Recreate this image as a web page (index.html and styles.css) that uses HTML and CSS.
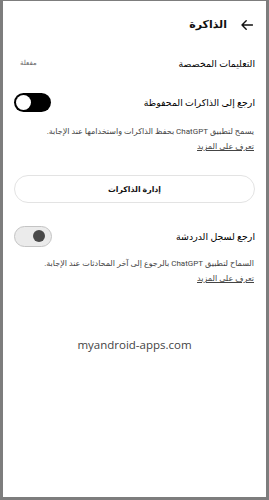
FILE: index.html
```html
<!DOCTYPE html>
<html lang="ar" dir="rtl">
<head>
<meta charset="utf-8">
<link rel="stylesheet" href="styles.css">
</head>
<body>
<div class="frame">
  <header class="topbar">
    <svg class="back" width="12" height="10" viewBox="0 0 12 10"><path d="M11.5 5H1M5.2 0.8L1 5l4.2 4.2" fill="none" stroke="#111" stroke-width="1.4" stroke-linecap="round" stroke-linejoin="round"/></svg>
    <h1 class="title">الذاكرة</h1>
  </header>

  <div class="row row-custom">
    <span class="label">التعليمات المخصصة</span>
    <span class="status">مفعلة</span>
  </div>

  <div class="row row-toggle">
    <span class="label">ارجع إلى الذاكرات المحفوظة</span>
    <span class="switch on"><span class="knob"></span></span>
  </div>
  <p class="desc">يسمح لتطبيق ChatGPT بحفظ الذاكرات واستخدامها عند الإجابة.<br><a class="more">تعرف على المزيد</a></p>

  <button class="manage">إدارة الذاكرات</button>

  <div class="row row-toggle2">
    <span class="label">ارجع لسجل الدردشة</span>
    <span class="switch off"><span class="knob"></span></span>
  </div>
  <p class="desc desc-chat">السماح لتطبيق ChatGPT بالرجوع إلى آخر المحادثات عند الإجابة.<br><a class="more">تعرف على المزيد</a></p>

  <div class="watermark">myandroid-apps.com</div>
</div>
</body>
</html>
```
FILE: styles.css
```css
* { box-sizing: border-box; }
html, body { margin: 0; padding: 0; }
body {
  width: 269px;
  height: 500px;
  background: #fff;
  font-family: Roboto, "DejaVu Sans", sans-serif;
  color: #111;
}
.frame {
  width: 269px;
  height: 500px;
  border-style: solid;
  border-color: #7d7d7d;
  border-width: 1px 3px 3px 3px;
  background: #fff;
  padding: 0 11px 0 11px;
  display: flex;
  flex-direction: column;
}
.topbar {
  display: flex;
  align-items: center;
  gap: 14px;
  height: 20px;
  margin-top: 14px;
  margin-right: 2px;
}
.title {
  margin: 0;
  font-size: 11px;
  font-weight: bold;
  line-height: 20px;
}
.row {
  display: flex;
  align-items: center;
  justify-content: space-between;
}
.label { font-size: 9.4px; color: #000; }
.row-custom { margin-top: 20px; height: 16px; }
.status { font-size: 7px; color: #666; margin-left: 6px; }
.row-toggle { margin-top: 21px; height: 20px; }
.row-toggle2 { margin-top: 22px; height: 22px; }
.switch {
  width: 37px;
  height: 19px;
  border-radius: 10px;
  display: flex;
  align-items: center;
}
.switch.on {
  background: #000;
  justify-content: flex-end;
  padding: 0 2px;
}
.switch.on .knob {
  width: 15px; height: 15px; border-radius: 50%; background: #fff;
}
.switch.off {
  width: 38px;
  height: 21px;
  background: #ebebeb;
  border: 1px solid #c4c4c4;
  border-radius: 11px;
  justify-content: flex-start;
  padding: 0 6px;
}
.switch.off .knob {
  width: 12px; height: 12px; border-radius: 50%; background: #4a4a4a;
}
.desc {
  margin: 12px 1px 0 0;
  font-size: 8px;
  line-height: 15px;
  color: #444;
}
.desc-chat { margin-top: 9px; }
.more { color: #444; text-decoration: underline; }
.manage {
  margin: 21px 0 0 0;
  height: 28px;
  border: 1px solid #e3e3e3;
  border-radius: 14px;
  background: #fff;
  font-family: Roboto, "DejaVu Sans", sans-serif;
  font-size: 7.8px;
  font-weight: bold;
  color: #111;
}
.watermark {
  margin-top: 51px;
  text-align: center;
  direction: ltr;
  font-family: "Open Sans", sans-serif;
  font-size: 11.5px;
  color: #444;
}
```
